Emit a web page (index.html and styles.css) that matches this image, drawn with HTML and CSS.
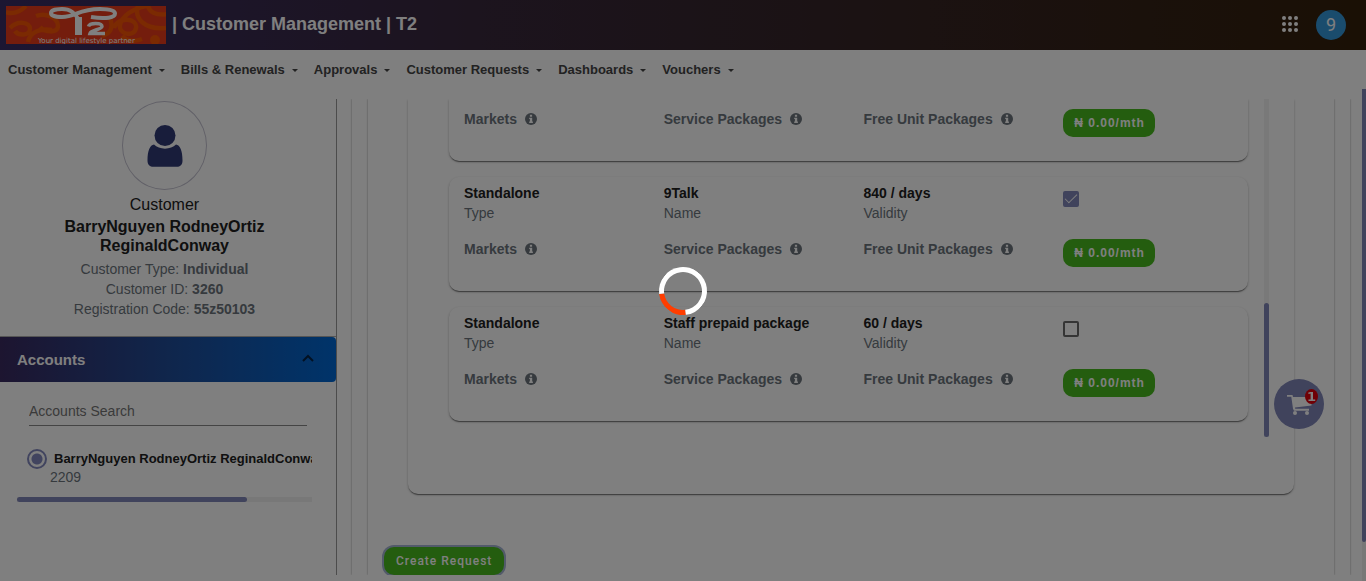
FILE: index.html
```html
<!DOCTYPE html>
<html lang="en">
<head>
<meta charset="utf-8">
<title>Customer Management | T2</title>
<link rel="stylesheet" href="styles.css">
</head>
<body>
<svg class="defs" aria-hidden="true">
  <symbol id="info" viewBox="0 0 12 12"><circle cx="6" cy="6" r="6" fill="currentColor"/><path d="M4.900 1.800h2.200v1.900H4.900zM4.200 4.700h3v3.800h.7v1.400H4.200V8.500h.7V6.100h-.7z" fill="#fff"/></symbol>
</svg>
<header class="topbar">
  <svg class="logo" viewBox="0 0 160 38" role="img" aria-label="T2">
    <rect width="160" height="38" fill="#e83a1a"/>
    <g fill="none" stroke="#f65404" stroke-width="4.500">
      <path d="M0 6c8 3 14 0 20-6M4 22c8-8 20-6 20 1s-12 7-15 2M30 10c10-4 22 2 22 10s-14 6-18 1M22 36c2-10 12-14 24-12M104 12c4 10 0 16-8 18M108 22c4-12 24-10 22 0s-18 6-16-3 12-16 26-19M116 30c4 5 12 6 20 3M132 0c-4 12 6 24 28 22M142 -2c0 8 8 12 20 10"/>
    </g>
    <circle cx="149" cy="34" r="5" fill="#f65404"/>
    <g fill="none" stroke="#fff">
      <path d="M73 15C69 6 64 3 56 3c-7 0-11 1.500-11 4s4 4 11 4C70 11 72 3 94 3c10 0 15 1.500 15 4.500 0 4-9 6-24 3.500" stroke-width="4"/>
      <path d="M72.500 11v18" stroke-width="7"/>
      <path d="M82.500 20.500c1-4 13.500-4 13.500 0 0 3-11 3.500-12 7h15" stroke-width="3.500"/>
    </g>
    <text x="32" y="37" class="logo-text">Your digital lifestyle partner</text>
  </svg>
  <h1 class="title">| Customer Management | T2</h1>
  <button class="apps" aria-label="Apps">
    <svg viewBox="0 0 16 16" fill="#fff"><circle cx="2" cy="2" r="2"/><circle cx="8" cy="2" r="2"/><circle cx="14" cy="2" r="2"/><circle cx="2" cy="8" r="2"/><circle cx="8" cy="8" r="2"/><circle cx="14" cy="8" r="2"/><circle cx="2" cy="14" r="2"/><circle cx="8" cy="14" r="2"/><circle cx="14" cy="14" r="2"/></svg>
  </button>
  <button class="user">9</button>
</header>
<nav class="menu">
  <a href="#">Customer Management</a>
  <a href="#">Bills &amp; Renewals</a>
  <a href="#">Approvals</a>
  <a href="#">Customer Requests</a>
  <a href="#">Dashboards</a>
  <a href="#">Vouchers</a>
</nav>
<div class="page">
  <aside class="sidebar">
    <section class="profile">
      <div class="portrait">
        <svg viewBox="0 0 36 42" fill="#303a76"><circle cx="18" cy="10.500" r="10.500"/><path d="M7 19.500c5 5.500 17 5.500 22 0 4 .5 6.500 6 6.500 16 0 4-2 6.300-6 6.300h-23c-4 0-6-2.300-6-6.300 0-10 2.500-15.500 6.500-16z"/></svg>
      </div>
      <p class="role">Customer</p>
      <h2 class="name">BarryNguyen RodneyOrtiz ReginaldConway</h2>
      <p class="fact">Customer Type: <b>Individual</b></p>
      <p class="fact">Customer ID: <b>3260</b></p>
      <p class="fact">Registration Code: <b>55z50103</b></p>
    </section>
    <button class="accordion">Accounts
      <svg viewBox="0 0 12 8" fill="none" stroke="#052347" stroke-width="2"><path d="M1 7l5-5 5 5"/></svg>
    </button>
    <div class="accounts">
      <input class="search" type="text" placeholder="Accounts Search" aria-label="Accounts Search">
      <div class="account-list">
        <input class="radio" type="radio" id="acc" name="acc" checked>
        <div class="account-text">
          <label for="acc">BarryNguyen RodneyOrtiz ReginaldConway</label>
          <span class="number">2209</span>
        </div>
      </div>
      <div class="hscroll"><div class="hthumb"></div></div>
    </div>
  </aside>
  <main class="main">
    <div class="outer">
      <div class="middle">
        <section class="packages">
          <div class="list">
            <article class="card card-scrolled">
              <b class="meta">Markets <svg><use href="#info"/></svg></b>
              <b class="meta">Service Packages <svg><use href="#info"/></svg></b>
              <b class="meta">Free Unit Packages <svg><use href="#info"/></svg></b>
              <div><button class="green price">₦ 0.00/mth</button></div>
            </article>
            <article class="card">
              <div class="pair"><b>Standalone</b><span>Type</span></div>
              <div class="pair"><b>9Talk</b><span>Name</span></div>
              <div class="pair"><b>840 / days</b><span>Validity</span></div>
              <div><input class="check" type="checkbox" aria-label="Select 9Talk" checked></div>
              <b class="meta">Markets <svg><use href="#info"/></svg></b>
              <b class="meta">Service Packages <svg><use href="#info"/></svg></b>
              <b class="meta">Free Unit Packages <svg><use href="#info"/></svg></b>
              <div><button class="green price">₦ 0.00/mth</button></div>
            </article>
            <article class="card">
              <div class="pair"><b>Standalone</b><span>Type</span></div>
              <div class="pair"><b>Staff prepaid package</b><span>Name</span></div>
              <div class="pair"><b>60 / days</b><span>Validity</span></div>
              <div><input class="check" type="checkbox" aria-label="Select Staff prepaid package"></div>
              <b class="meta">Markets <svg><use href="#info"/></svg></b>
              <b class="meta">Service Packages <svg><use href="#info"/></svg></b>
              <b class="meta">Free Unit Packages <svg><use href="#info"/></svg></b>
              <div><button class="green price">₦ 0.00/mth</button></div>
            </article>
          </div>
          <div class="vscroll"><div class="vthumb"></div></div>
        </section>
        <button class="green create">Create Request</button>
      </div>
    </div>
  </main>
  <div class="page-scroll"><div class="page-thumb"></div></div>
</div>
<button class="cart" aria-label="Cart">
  <svg viewBox="0 0 25 20" fill="#fff"><path d="M0 0h5.500l.5 2h18.500v8.500L8 12.500l.2 1.300H22v2H7l-1-2L4.300 1.800H0z"/><circle cx="8" cy="18" r="2"/><circle cx="20" cy="18" r="2"/></svg>
  <span class="count">1</span>
</button>
<div class="overlay"><div class="spinner"></div></div>
</body>
</html>
```
FILE: styles.css
```css
* { box-sizing: border-box; }
body {
  margin: 0;
  height: 100vh;
  display: flex;
  flex-direction: column;
  overflow: hidden;
  background: #fff;
  font: 14px/20px "Liberation Sans", Arial, sans-serif;
  color: #212121;
}
h1, h2, p { margin: 0; }
button { border: 0; padding: 0; font: inherit; cursor: pointer; }
.defs { display: none; }

.topbar {
  flex: none;
  display: flex;
  align-items: center;
  height: 50px;
  padding: 0 20px 0 6px;
  background: linear-gradient(90deg, #382c64, #38283c 35%, #34200a);
  color: #fff;
}
.logo { width: 160px; height: 38px; }
.logo-text { font: 7px "DejaVu Sans", sans-serif; fill: #fff; }
.title { flex: 1; margin-left: 6px; font-size: 18px; line-height: 24px; margin-bottom: 2px; }
.apps { width: 16px; height: 16px; margin: 0 18px 2px 0; background: none; }
.apps svg { display: block; }
.user {
  width: 30px;
  height: 30px;
  border-radius: 50%;
  background: #3498db;
  color: #fff;
  font: 18px/28px Roboto, sans-serif;
}

.menu { flex: none; display: flex; gap: 16px; padding: 10px 8px 9px; }
.menu a {
  display: flex;
  align-items: center;
  gap: 7px;
  color: #444;
  font-size: 13px;
  font-weight: bold;
  text-decoration: none;
}
.menu a::after { content: ""; border: 3px solid transparent; border-top-color: #444; border-bottom: 0; }

.page { flex: 1; min-height: 0; display: flex; }
.sidebar {
  flex: none;
  width: 337px;
  margin: 10px 0 6px;
  border-right: 1px solid #999;
  overflow: hidden;
}
.profile {
  display: flex;
  flex-direction: column;
  align-items: center;
  padding: 2px 7px 17px 0;
  border-bottom: 1px solid #aaa;
  text-align: center;
}
.portrait {
  display: flex;
  align-items: center;
  justify-content: center;
  width: 85px;
  height: 89px;
  margin-bottom: 5px;
  border: 1px solid #c4c2d0;
  border-radius: 50%;
}
.portrait svg { width: 36px; height: 42px; }
.role { font-size: 16px; }
.name { width: 240px; margin: 2px 0 4px; font-size: 16px; line-height: 19px; }
.fact { color: #6c757d; line-height: 20px; }
.accordion {
  display: flex;
  align-items: center;
  justify-content: space-between;
  width: 100%;
  height: 45px;
  padding: 0 22px 0 17px;
  border-radius: 0 4px 4px 0;
  background: linear-gradient(90deg, #3a2a60, #204c98 50%, #0068d4);
  color: #fff;
  font-size: 15px;
  font-weight: bold;
}
.accordion svg { width: 12px; height: 8px; margin-bottom: 4px; }
.accounts { padding: 16px 24px 0 17px; }
.search {
  display: block;
  width: 278px;
  margin-left: 12px;
  padding: 4px 0;
  border: 0;
  border-bottom: 1px solid #888;
  background: none;
  font: 14px/19px "Liberation Sans", Arial, sans-serif;
}
.search::placeholder { color: #757575; }
.account-list { display: flex; gap: 3px; margin: 23px 0 10px 10px; overflow: hidden; }
.radio {
  appearance: none;
  flex: none;
  width: 20px;
  height: 20px;
  margin: 0;
  border: 2px solid #8288be;
  border-radius: 50%;
  background: radial-gradient(circle, #8288be 5px, transparent 6px);
}
.account-text { display: flex; flex-direction: column; white-space: nowrap; line-height: 19px; }
.account-text label { padding-left: 4px; font-size: 13px; font-weight: bold; }
.number { color: #6c757d; }
.hscroll { height: 5px; background: #f0f0f0; }
.hthumb { width: 78%; height: 5px; border-radius: 3px; background: #8086b8; }

.main { flex: 1; min-width: 0; display: flex; margin: 10px 0 6px; padding: 0 12px 0 15px; overflow: hidden; }
.outer, .middle { flex: 1; min-width: 0; box-shadow: 0 0 2px rgba(0, 0, 0, .4); }
.outer { display: flex; padding: 0 16px; }
.middle { padding: 0 40px; }
.packages {
  display: flex;
  gap: 16px;
  padding: 0 25px 73px 41px;
  border-radius: 0 0 10px 10px;
  box-shadow: 0 2px 1px -1px rgba(0, 0, 0, .3), 0 1px 1px rgba(0, 0, 0, .2), 0 1px 3px rgba(0, 0, 0, .2);
}
.list { flex: 1; display: grid; gap: 16px; }
.card {
  display: grid;
  grid-template-columns: repeat(4, 1fr);
  row-gap: 16px;
  padding: 6px 0 24px;
  border-radius: 10px;
  box-shadow: 0 2px 1px -1px rgba(0, 0, 0, .3), 0 1px 1px rgba(0, 0, 0, .2), 0 1px 3px rgba(0, 0, 0, .2);
}
.card > * { padding-left: 15px; }
.card-scrolled { padding-top: 10px; border-radius: 0 0 10px 10px; }
.pair { display: flex; flex-direction: column; height: 40px; }
.pair span { color: #6c757d; }
.meta { display: flex; align-items: center; gap: 8px; height: 20px; color: #6c757d; }
.meta svg { width: 12px; height: 12px; }
.check {
  appearance: none;
  display: grid;
  place-content: center;
  width: 16px;
  height: 16px;
  margin: 8px 0 0;
  border: 2px solid #6a6a6a;
  border-radius: 2px;
}
.check:checked { border-color: #8086b8; background: #8086b8; }
.check:checked::after {
  content: "";
  width: 11px;
  height: 5px;
  margin-bottom: 4px;
  border: solid #fff;
  border-width: 0 0 1px 1px;
  transform: rotate(-45deg);
}
.green { display: block; height: 28px; border-radius: 10px; background: #48ba1e; color: #fff; letter-spacing: 1px; }
.price { padding: 0 10px 0 11px; font-size: 12px; font-weight: bold; }
.create {
  margin: 53px 0 0 -24px;
  padding: 0 12px;
  font: 500 12px/28px Roboto, sans-serif;
  box-shadow: 0 0 0 2px #a4b4d4;
}
.vscroll { width: 5px; margin-bottom: -16px; padding-top: 204px; background: #f2f2f2; }
.vthumb { height: 100%; border-radius: 3px; background: #8086b8; }
.page-scroll { flex: none; width: 4px; background: #f0f0ee; }
.page-thumb { height: 92%; border-radius: 0 0 3px 3px; background: #8086b8; }

.cart {
  position: fixed;
  right: 42px;
  bottom: 152px;
  width: 50px;
  height: 50px;
  border-radius: 50%;
  background: #8086b8;
}
.cart svg { display: block; width: 25px; height: 20px; margin: 2px 0 0 13px; }
.count {
  position: absolute;
  top: 10px;
  right: 6px;
  width: 13px;
  height: 15px;
  border-radius: 50%;
  background: #e0000c;
  color: #fff;
  font: bold 13px/15px "DejaVu Sans", sans-serif;
}
.overlay {
  position: fixed;
  inset: 0;
  display: flex;
  align-items: center;
  justify-content: center;
  background: rgba(0, 0, 0, .5);
}
.spinner {
  width: 48px;
  height: 48px;
  border: 5px solid #fff;
  border-bottom-color: #ff3d00;
  border-radius: 50%;
  transform: rotate(38deg);
}
```
